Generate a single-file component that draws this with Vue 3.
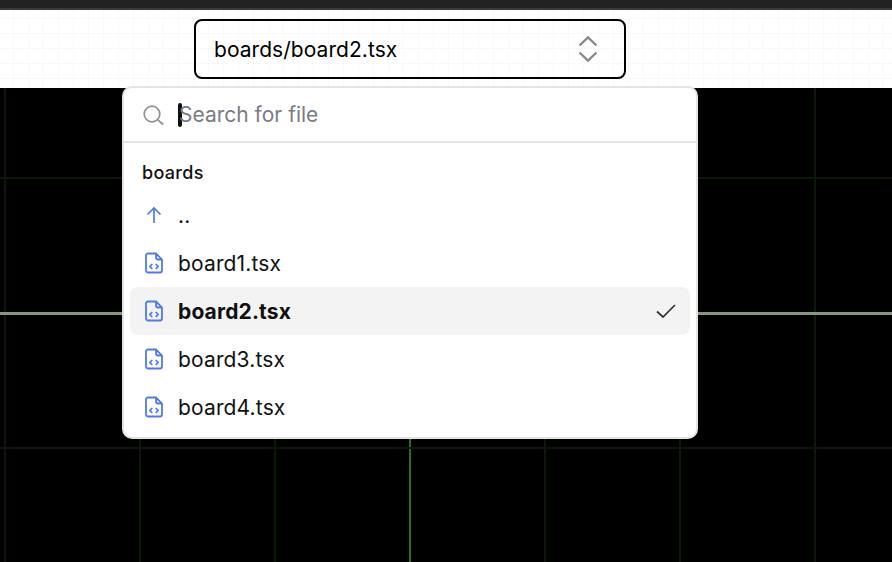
<script setup>
const files = ['board1.tsx', 'board2.tsx', 'board3.tsx', 'board4.tsx']
const selected = 'board2.tsx'
const vLines = [4, 139, 274, 409, 544, 679, 814]
const hLines = [177, 312, 447]
</script>

<template>
  <div class="page">
    <div class="topbar"></div>
    <header class="toolbar">
      <div class="select">
        <span class="select-label">boards/board2.tsx</span>
        <svg class="chevrons" width="20" height="28" viewBox="0 0 20 28" fill="none" stroke="#8a8a8a" stroke-width="2.400">
          <path d="M1.500 10.500 10 2.500l8.500 8" />
          <path d="M1.500 17.500 10 25.500l8.500-8" />
        </svg>
      </div>
    </header>
    <main class="canvas">
      <i v-for="x in vLines" :key="'v' + x" class="line v" :class="{ axis: x === 409 }" :style="{ left: x + 'px' }"></i>
      <i v-for="y in hLines" :key="'h' + y" class="line h" :class="{ axis: y === 312 }" :style="{ top: y - 88 + 'px' }"></i>
    </main>
    <div class="popup">
      <div class="search">
        <svg width="24" height="24" viewBox="0 0 24 24" fill="none" stroke="#8f8f94" stroke-width="1.700">
          <circle cx="10" cy="11" r="7.800" />
          <path d="m15.800 16.800 5.400 4.700" />
        </svg>
        <span class="caret"></span>
        <span class="placeholder">Search for file</span>
      </div>
      <div class="list">
        <div class="heading">boards</div>
        <div class="item">
          <svg class="icon" width="20" height="20" viewBox="0 0 20 20" fill="none" stroke="#5279ea" stroke-width="1.700">
            <path d="M10 18V3M3.500 9.500 10 3l6.500 6.500" />
          </svg>
          <span>..</span>
        </div>
        <div v-for="f in files" :key="f" class="item" :class="{ active: f === selected }">
          <svg class="icon" width="20" height="24" viewBox="0 0 20 24" fill="none" stroke="#5279ea" stroke-width="1.800">
            <path d="M4 2.500h8l6 6v11a2 2 0 0 1-2 2H4a2 2 0 0 1-2-2v-15a2 2 0 0 1 2-2Z" />
            <path d="M12 2.500v4a2 2 0 0 0 2 2h4" />
            <path d="M8.200 13 6 15.500 8.200 18M11.800 13l2.200 2.500-2.200 2.500" />
          </svg>
          <span class="name">{{ f }}</span>
          <svg v-if="f === selected" class="check" width="22" height="16" viewBox="0 0 22 16" fill="none" stroke="#333" stroke-width="1.700">
            <path d="M2 8.500 8 14 20 2" />
          </svg>
        </div>
      </div>
    </div>
  </div>
</template>

<style>
html, body { margin: 0; background: #000; }
</style>

<style scoped>
.page {
  position: relative;
  width: 892px;
  height: 562px;
  overflow: hidden;
  display: flex;
  flex-direction: column;
  font-family: Inter, "Liberation Sans", sans-serif;
  color: #111;
}
.topbar {
  height: 8px;
  background: #222;
  border-bottom: 2px solid #3a3a3a;
}
.toolbar {
  height: 78px;
  box-sizing: border-box;
  padding: 9px 0 0 194px;
  background-color: #fff;
  background-image:
    linear-gradient(#f9f9f9 1px, transparent 1px),
    linear-gradient(90deg, #f9f9f9 1px, transparent 1px);
  background-size: 15px 15px;
  background-position: 13px 8px;
}
.select {
  width: 432px;
  height: 60px;
  box-sizing: border-box;
  border: 2px solid #000;
  border-radius: 8px;
  display: flex;
  align-items: center;
  justify-content: space-between;
  padding: 0 26px 0 18px;
}
.select-label { font-size: 21px; letter-spacing: 0.05px; color: #000; }
.canvas {
  position: relative;
  flex: 1;
  overflow: hidden;
  background: #000;
}
.line { position: absolute; display: block; background: #0c180a; }
.line.v { top: 0; bottom: 0; width: 2px; }
.line.h { left: 0; right: 0; height: 2px; }
.line.v.axis { background: #2f6a28; }
.line.h.axis { background: #85977f; height: 3px; }
.popup {
  position: absolute;
  left: 122px;
  top: 86px;
  width: 576px;
  height: 353px;
  box-sizing: border-box;
  background: #fff;
  border: 2px solid #e3e3e3;
  border-radius: 10px;
  overflow: hidden;
}
.search {
  height: 55px;
  box-sizing: border-box;
  display: flex;
  align-items: center;
  padding-left: 18px;
  border-bottom: 2px solid #e5e5e5;
}
.caret {
  width: 4px;
  height: 24px;
  margin-left: 12px;
  border-radius: 2px;
  background: #111;
}
.placeholder {
  font-size: 21px;
  color: #7b7b85;
  margin-left: -3px;
}
.list { padding: 14px 6px 0; }
.heading {
  font-size: 18px;
  font-weight: 500;
  letter-spacing: 0.3px;
  height: 34px;
  line-height: 32px;
  padding-left: 12px;
}
.item {
  height: 48px;
  display: flex;
  align-items: center;
  padding-left: 14px;
  border-radius: 8px;
  font-size: 21px;
  letter-spacing: 0.15px;
  color: #111;
}
.icon { width: 20px; margin-right: 14px; }
.item.active { background: #f3f3f3; font-weight: 700; }
.check { margin-left: auto; margin-right: 13px; }
</style>
